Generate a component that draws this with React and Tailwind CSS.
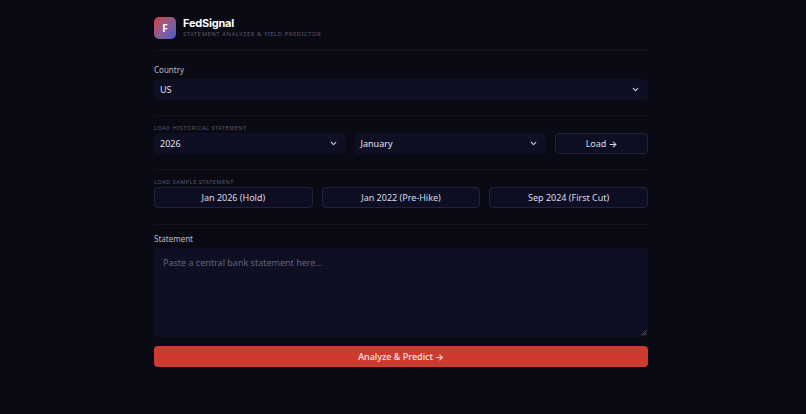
import { ChevronDown } from 'lucide-react';

const samples = ['Jan 2026 (Hold)', 'Jan 2022 (Pre-Hike)', 'Sep 2024 (First Cut)'];

function Arrow() {
  return <span className="font-['Inter',sans-serif] font-semibold">→</span>;
}

function Select({ value, className = '' }) {
  return (
    <div className={`h-[21px] rounded-[4px] bg-[#0f0f24] pl-[6px] pr-[8px] flex items-center justify-between text-[9px] text-[#e2e2ea] ${className}`}>
      <span>{value}</span>
      <ChevronDown size={9} strokeWidth={3} className="text-[#d0d0da]" />
    </div>
  );
}

function SmallLabel({ children }) {
  return <div className="h-[8px] leading-[8px] text-[5.5px] tracking-[0.1em] uppercase text-[#5a5a6e] mb-[1px]">{children}</div>;
}

export default function App() {
  return (
    <div className="min-h-[414px] bg-[#0a0a15] font-['Noto_Sans',sans-serif]">
      <div className="ml-[154px] w-[494px] pt-[17px]">
        {/* Header */}
        <div className="flex items-center gap-[7px] pb-[11px] border-b border-[#13131f]">
          <div className="w-[22px] h-[22px] rounded-[5px] bg-gradient-to-br from-[#d0383c] to-[#3f5bd0] flex items-center justify-center text-white text-[10px] font-bold">F</div>
          <div>
            <div className="font-['Inter',sans-serif] text-[11px] leading-[13px] font-bold text-white tracking-[-0.02em]">FedSignal</div>
            <div className="text-[5.8px] leading-[9px] tracking-[0.1em] uppercase text-[#5a5a6e]">Statement Analyzer &amp; Yield Predictor</div>
          </div>
        </div>

        {/* Country */}
        <div className="pt-[15px] pb-[15px] border-b border-[#13131f]">
          <div className="text-[8px] leading-[8px] text-[#bcbcc8] mb-[5px]">Country</div>
          <Select value="US" />
        </div>

        {/* Historical */}
        <div className="pt-[8px] pb-[15px] border-b border-[#13131f]">
          <SmallLabel>Load historical statement</SmallLabel>
          <div className="flex gap-[9px]">
            <Select value="2026" className="flex-1" />
            <Select value="January" className="flex-1" />
            <button className="w-[93px] h-[21px] rounded-[4px] bg-[#0e0e22] border border-[#22223c] text-[9px] text-[#dcdce4]">Load <Arrow /></button>
          </div>
        </div>

        {/* Samples */}
        <div className="pt-[8px] pb-[16px] border-b border-[#13131f]">
          <SmallLabel>Load sample statement</SmallLabel>
          <div className="grid grid-cols-3 gap-[9px]">
            {samples.map((s) => (
              <button key={s} className="h-[21px] rounded-[4px] bg-[#0e0e22] border border-[#22223c] text-[9px] text-[#dcdce4]">{s}</button>
            ))}
          </div>
        </div>

        {/* Statement */}
        <div className="pt-[10px]">
          <div className="text-[8px] leading-[8px] text-[#bcbcc8] mb-[5px]">Statement</div>
          <div className="relative">
            <textarea
              placeholder="Paste a central bank statement here..."
              className="block w-full h-[89px] resize-none rounded-[4px] bg-[#0f0f24] px-[9px] py-[8px] text-[9px] outline-none placeholder:text-[#62627a]"
            />
            <svg viewBox="0 0 6 6" className="absolute right-[1px] bottom-[1px] w-[6px] h-[6px]">
              <path d="M0.5 5.5 L5.5 0.5 M3 5.5 L5.5 3" stroke="#6a6a78" strokeWidth="0.8" fill="none" />
            </svg>
          </div>
          <button className="mt-[9px] w-full h-[21px] rounded-[4px] bg-[#cc3a30] text-[9px] font-medium text-[#fbe4e2]">Analyze &amp; Predict <Arrow /></button>
        </div>
      </div>
    </div>
  );
}
